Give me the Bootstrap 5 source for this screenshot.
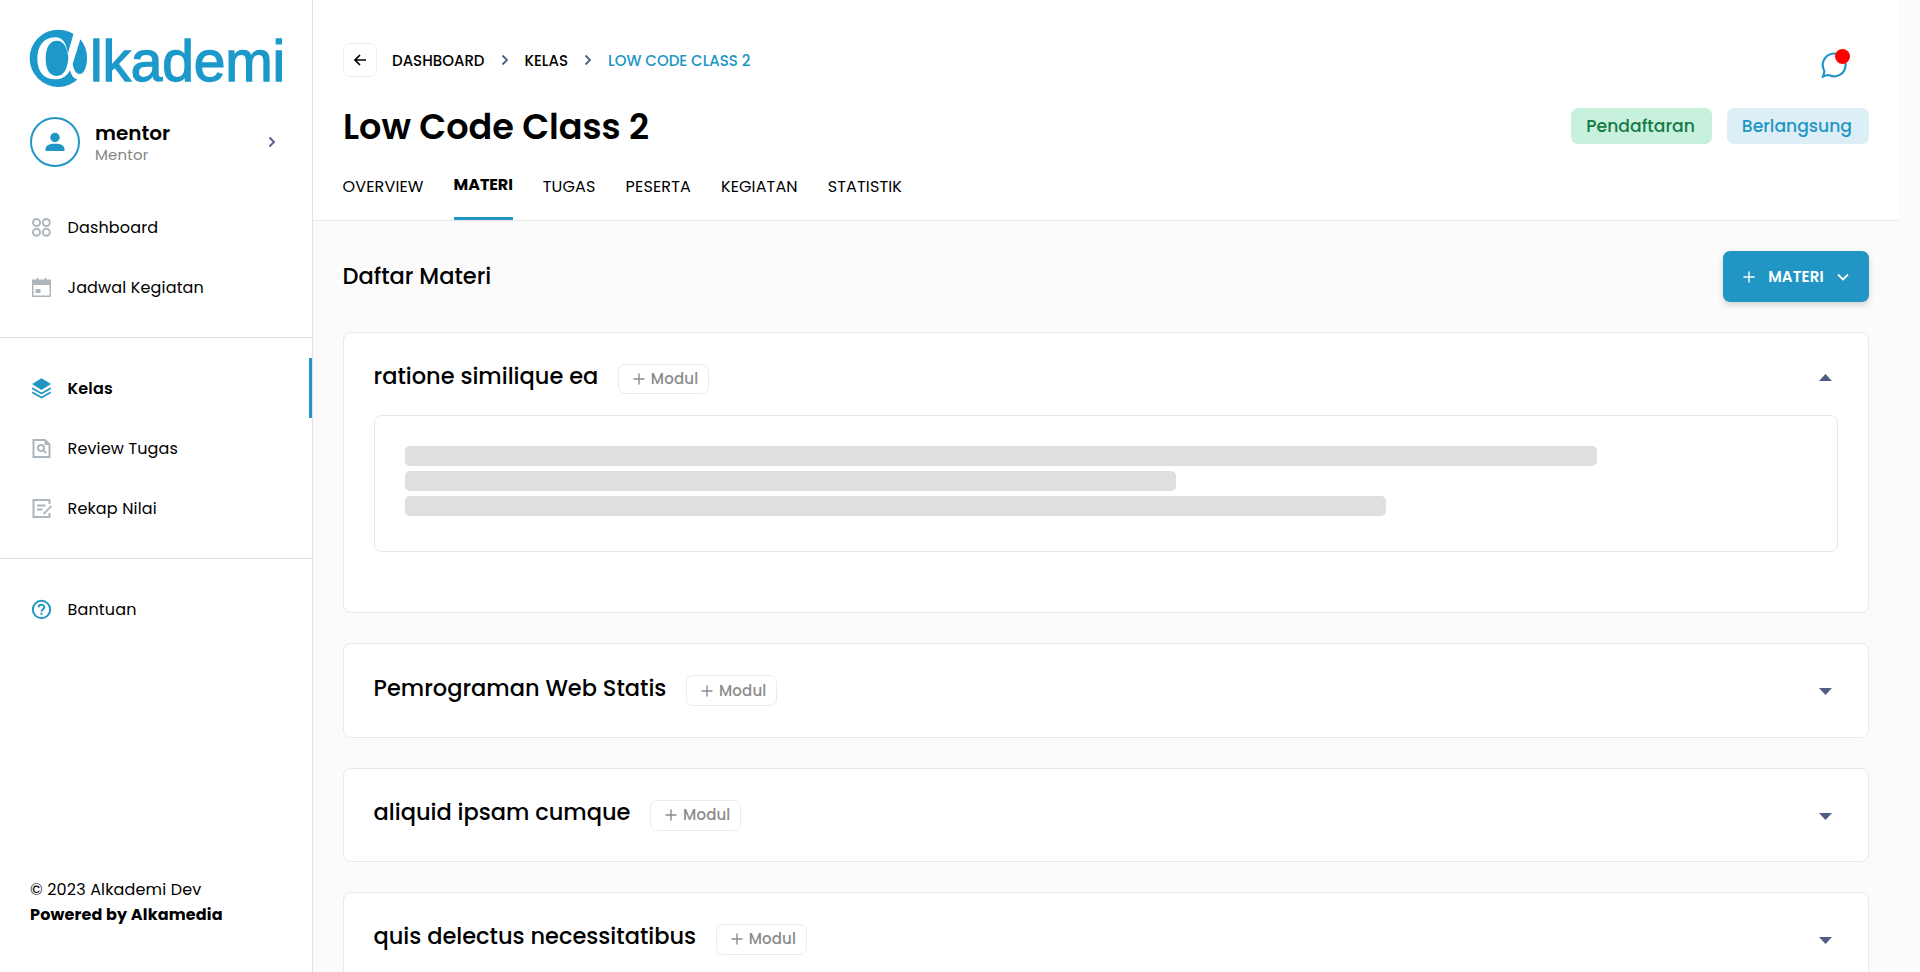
<!DOCTYPE html>
<html lang="id">
<head>
<meta charset="utf-8">
<title>Low Code Class 2 - Alkademi</title>
<link href="https://cdn.jsdelivr.net/npm/bootstrap@5.3.0/dist/css/bootstrap.min.css" rel="stylesheet">
<style>
:root{--brand:#2196c5;--line:#e7eaec}
body{font-family:Poppins,Inter,"Open Sans",sans-serif;background:#fbfbfb;color:#000;font-size:16px;line-height:24px;letter-spacing:.15px}
button{letter-spacing:inherit}
.app{height:972px;overflow:hidden}
.sidebar{width:313px;border-right:1px solid #e2e2e2;background:#fff}
.logo{margin:28px 0 0 28px}
.profile{margin:25px 36.500px 0 30px;height:50px}
.profile-text{margin-left:15px}
.avatar{width:50px;height:50px;border:2px solid var(--brand);border-radius:50%}
.profile-name{font-size:20px;font-weight:600;line-height:26px;letter-spacing:0}
.profile-role{font-size:15px;line-height:18px;color:#848484}
.menu{margin-top:30px}
.menu-link{height:60px;padding-left:31px;gap:15.500px;color:#000;text-decoration:none;border-right:3px solid transparent}
.menu-link span{padding-top:1px}
.menu-link svg{width:21px;height:21px}
.menu-link.current{border-color:var(--brand);font-weight:600}
.divider{height:1px;background:#e2e2e2;margin:20px 0}
.foot{margin:0 0 45px 30px;line-height:25px}
.page-head{width:1586px;height:221px;background:#fff;border-bottom:1px solid #e7e9eb;padding:0 30px}
.top-row{height:77px}
.crumbs{margin-top:43px;height:34px;font-size:15px;font-weight:500;letter-spacing:0}
.crumbs span{padding-top:1px}
.crumbs .here{color:var(--brand)}
.back{width:34px;height:34px;border:1px solid #ececec;border-radius:7px;background:#fff;margin-right:15px}
.page-title{font-size:35px;font-weight:600;line-height:44px;margin:0;padding-top:2px;letter-spacing:0}
.title-row{margin-top:27px;height:44px}
.chips{gap:15px}
.chip{height:36px;border-radius:7px;padding:0 17px 0 15px;font-size:17.200px;font-weight:500;line-height:37px;letter-spacing:0}
.chip-green{background:#c7f1dc;color:#147a46}
.chip-blue{background:#dceef6;color:var(--brand)}
.tab-row{gap:30px;margin:20px 0 0 -.500px}
.tab-row a{color:#000;text-decoration:none;line-height:24px;padding-top:7px;height:52px}
.tab-row a.current{font-weight:700;letter-spacing:-.100px;border-bottom:3px solid var(--brand);padding-top:5px}
.content-area{width:1526px;margin-left:30px}
.section-row{margin:30px 0}
.section-title{font-size:22.500px;font-weight:500;margin:0 0 1px -.500px;line-height:30px;letter-spacing:0}
.btn-materi{width:146px;height:51px;border-radius:7px;background:var(--brand);color:#fff;font-size:15px;font-weight:600;box-shadow:0 3px 6px rgba(0,0,0,.16);padding:0 20px}
.panel{background:#fff;border:1px solid var(--line);border-radius:8px;padding:0 30px;height:94.400px;margin-bottom:30px}
.panel.open{height:281.200px}
.panel-head{height:82px;padding-top:28px}
.panel-title{font-size:22.500px;font-weight:500;margin:0 0 0 -.500px;line-height:30px;letter-spacing:0;padding-top:.500px}
.open .panel-title{padding-top:0}
.btn-modul{height:31px;width:91.500px;border:1px solid #e9ecef;border-radius:7px;background:#fff;color:#8b8b8b;font-size:15px;font-weight:500;padding:0 10px 0 14px;margin:3px 0 0 19.500px}
.open .btn-modul{height:30px}
.caret{width:13px;height:7px;margin:16px 6px 0 auto}
.open .caret{margin-top:13px}
.inner-box{border:1px solid var(--line);border-radius:7px;height:137px;padding:30px}
.bone{height:20px;border-radius:5px;background:#dfdfdf;margin-bottom:5px}
.chat{width:28px;height:28px;margin:50px 20px 0 0}
.dot{width:15px;height:15px;border-radius:50%;background:red;top:-1px;right:-1px}
</style>
</head>
<body>
<svg class="d-none"><defs>
<symbol id="chev" viewBox="0 0 8 12"><path d="M1.500 1.500 6 6l-4.500 4.500" fill="none" stroke="#4f5d84" stroke-width="1.800"/></symbol>
<symbol id="plus" viewBox="0 0 12 12"><path d="M6 .5v11M.5 6h11" stroke="currentColor" stroke-width="1.400"/></symbol>
<symbol id="down" viewBox="0 0 13 7"><path d="M0 0h13L6.500 7Z" fill="#4f5d84"/></symbol>
<symbol id="up" viewBox="0 0 13 7"><path d="M0 7h13L6.500 0Z" fill="#4f5d84"/></symbol>
</defs></svg>
<div class="app d-flex">
<aside class="sidebar d-flex flex-column flex-shrink-0">
<svg class="logo" width="260" height="64" viewBox="28 28 260 64">
<g transform="scale(.33333)"><circle cx="175" cy="175" r="86" fill="#1c99ca"/>
<path fill="#fff" d="M223 92 204 160C198 125 185 112 165 112 130 112 112 140 112 176c0 39 20 62 53 62 23 0 38-12 45-28 4 16 11 26 22 28l-2 6 45-18V80Z"/>
<path fill="#1c99ca" d="M241 118c14 17 20 37 20 57 0 20-7 47-21 47-12 0-18-10-22-30Z"/>
<path fill="#1c99ca" d="M171 122c20 0 31 22 34 50-2 35-14 56-34 56-22 0-34-20-34-52s11-54 34-54Z"/></g>
<text x="90" y="80.500" font-family="Liberation Sans,Arial,sans-serif" font-size="57" letter-spacing="-.2" fill="#1c99ca" stroke="#1c99ca" stroke-width="1.300">lkademi</text>
</svg>
<div class="profile d-flex align-items-center">
<div class="avatar d-flex align-items-center justify-content-center"><svg width="20" height="20" viewBox="0 0 20 20" fill="#2196c5"><circle cx="10" cy="5.500" r="4.700"/><path d="M.5 19v-1.500c0-4 3.500-5.700 9.500-5.700s9.500 1.700 9.500 5.700V19Z"/></svg></div>
<div class="profile-text"><div class="profile-name">mentor</div><div class="profile-role">Mentor</div></div>
<svg class="ms-auto" width="8" height="12"><use href="#chev"/></svg>
</div>
<nav class="menu d-flex flex-column">
<a class="menu-link d-flex align-items-center" href="#"><svg viewBox="0 0 21 21" fill="none" stroke="#adb5bd" stroke-width="2"><circle cx="5.500" cy="5.500" r="3.500"/><circle cx="15.300" cy="5.500" r="3.500"/><circle cx="5.500" cy="15.300" r="3.500"/><circle cx="15.300" cy="15.300" r="3.500"/></svg><span>Dashboard</span></a>
<a class="menu-link d-flex align-items-center" href="#"><svg viewBox="0 0 21 21" fill="#adb5bd"><path fill-rule="evenodd" d="M1 2.500h4.500V1h2v1.500h6V1h2v1.500H20V20H1ZM2.500 8v10.500h16V8Z"/><path d="M4.500 12h5v4h-5z"/></svg><span>Jadwal Kegiatan</span></a>
<div class="divider"></div>
<a class="menu-link current d-flex align-items-center" href="#"><svg viewBox="0 0 21 21"><path fill="#2196c5" d="M10.500.3 20 6l-9.500 6L1 6Z"/><path d="m1.200 10.200 9.300 5.300 9.300-5.300M1.200 14.200l9.300 5.400 9.300-5.400" fill="none" stroke="#2196c5" stroke-width="1.700"/></svg><span>Kelas</span></a>
<a class="menu-link d-flex align-items-center" href="#"><svg viewBox="0 0 21 21" fill="none" stroke="#adb5bd" stroke-width="2"><path d="M2.500 2h11.500l4.500 4.500V19H2.500Z"/><path d="M13.500 1v6H19Z" fill="#adb5bd" stroke="none"/><circle cx="10" cy="10" r="3"/><path d="m12 12 3 3"/></svg><span>Review Tugas</span></a>
<a class="menu-link d-flex align-items-center" href="#"><svg viewBox="0 0 21 21" fill="none" stroke="#adb5bd" stroke-width="2"><path d="M18.500 6V2h-16v17h16v-4"/><path d="M6 7.500h8.500M6 11.500h5.500M12.500 16 20.500 8" stroke-width="1.800"/></svg><span>Rekap Nilai</span></a>
<div class="divider"></div>
<a class="menu-link d-flex align-items-center" href="#"><svg viewBox="0 0 21 21" fill="none" stroke="#2196c5" stroke-width="2"><circle cx="10.500" cy="10.500" r="8.700"/><path d="M7.700 8.300c0-3.300 5.600-3.300 5.600 0 0 1.900-2.800 2-2.800 4.200M10.500 13.700v2"/></svg><span>Bantuan</span></a>
</nav>
<div class="foot mt-auto"><div>© 2023 Alkademi Dev</div><div class="fw-bold">Powered by Alkamedia</div></div>
</aside>
<main class="flex-grow-1">
<header class="page-head d-flex flex-column">
<div class="top-row d-flex justify-content-between">
<div class="crumbs d-flex align-items-center">
<button class="back p-0 d-flex align-items-center justify-content-center"><svg width="12" height="12" viewBox="0 0 12 12" fill="none" stroke="#000" stroke-width="1.600"><path d="M12 6H1.200M6 1 1 6l5 5"/></svg></button>
<span>DASHBOARD</span><svg class="mx-3" width="8" height="12"><use href="#chev"/></svg><span>KELAS</span><svg class="mx-3" width="8" height="12"><use href="#chev"/></svg><span class="here">LOW CODE CLASS 2</span>
</div>
<div class="chat position-relative"><svg class="d-block" width="28" height="28" viewBox="0 0 28 28" fill="none" stroke="#2196c5" stroke-width="2.200"><path d="M2 26.600c.8-2.500 1.500-4 1.200-6.100A11.400 11.400 0 1 1 8.400 25.300c-2-.6-4 .2-6.400 1.300Z"/></svg><span class="dot position-absolute"></span></div>
</div>
<div class="title-row d-flex align-items-center justify-content-between"><h1 class="page-title">Low Code Class 2</h1>
<div class="chips d-flex"><span class="chip chip-green">Pendaftaran</span><span class="chip chip-blue">Berlangsung</span></div></div>
<nav class="tab-row d-flex"><a href="#">OVERVIEW</a><a class="current" href="#">MATERI</a><a href="#">TUGAS</a><a href="#">PESERTA</a><a href="#">KEGIATAN</a><a href="#">STATISTIK</a></nav>
</header>
<div class="content-area">
<div class="section-row d-flex justify-content-between align-items-center"><h2 class="section-title">Daftar Materi</h2>
<button class="btn-materi border-0 d-flex align-items-center justify-content-between"><svg width="12" height="12"><use href="#plus"/></svg>MATERI<svg width="12" height="8" viewBox="0 0 12 8"><path d="m1 1.500 5 5 5-5" fill="none" stroke="#fff" stroke-width="1.800"/></svg></button></div>
<section class="panel open"><div class="panel-head d-flex align-items-start"><h3 class="panel-title">ratione similique ea</h3><button class="btn-modul d-flex align-items-center justify-content-between"><svg width="12" height="12"><use href="#plus"/></svg>Modul</button><svg class="caret"><use href="#up"/></svg></div><div class="inner-box"><div class="bone" style="width:85%"></div><div class="bone" style="width:55%"></div><div class="bone" style="width:70%"></div></div></section>
<section class="panel"><div class="panel-head d-flex align-items-start"><h3 class="panel-title">Pemrograman Web Statis</h3><button class="btn-modul d-flex align-items-center justify-content-between"><svg width="12" height="12"><use href="#plus"/></svg>Modul</button><svg class="caret"><use href="#down"/></svg></div></section>
<section class="panel"><div class="panel-head d-flex align-items-start"><h3 class="panel-title">aliquid ipsam cumque</h3><button class="btn-modul d-flex align-items-center justify-content-between"><svg width="12" height="12"><use href="#plus"/></svg>Modul</button><svg class="caret"><use href="#down"/></svg></div></section>
<section class="panel"><div class="panel-head d-flex align-items-start"><h3 class="panel-title">quis delectus necessitatibus</h3><button class="btn-modul d-flex align-items-center justify-content-between"><svg width="12" height="12"><use href="#plus"/></svg>Modul</button><svg class="caret"><use href="#down"/></svg></div></section>
</div>
</main>
</div>
<script src="https://cdn.jsdelivr.net/npm/bootstrap@5.3.0/dist/js/bootstrap.bundle.min.js"></script>
</body>
</html>
